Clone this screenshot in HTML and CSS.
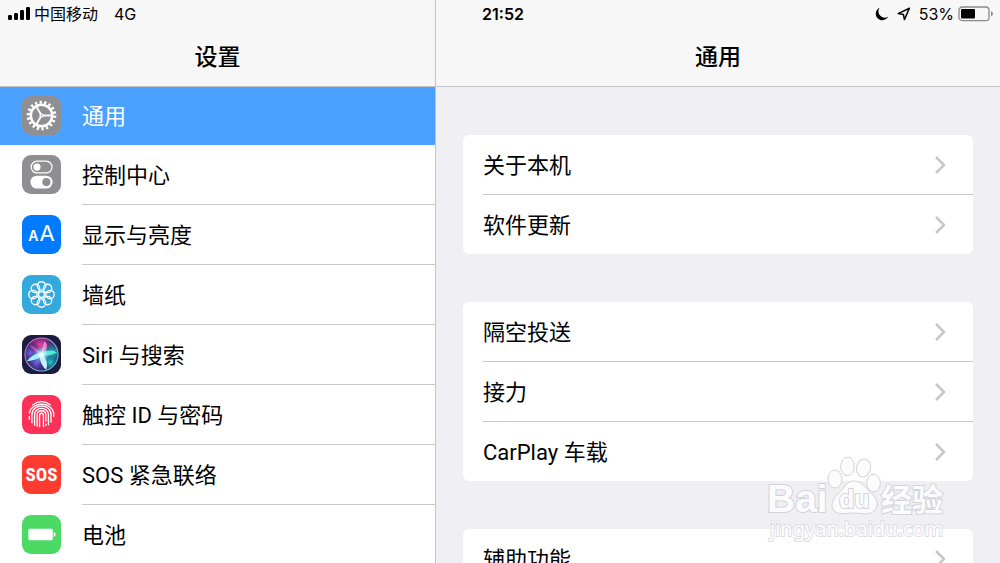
FILE: index.html
```
<!DOCTYPE html>
<html lang="zh-CN">
<head>
<meta charset="utf-8">
<meta name="viewport" content="width=device-width, initial-scale=1">
<title>设置</title>
<link rel="stylesheet" href="styles.css">
</head>
<body>
<div class="app">
  <div class="status">
    <div class="status-left">
      <svg class="signal" viewBox="0 0 22 14" aria-hidden="true"><rect x="0" y="8" width="4" height="5" rx="1.3"/><rect x="6" y="6" width="4" height="7" rx="1.3"/><rect x="12" y="3" width="4" height="10" rx="1.3"/><rect x="18" y="0" width="4" height="13" rx="1.3"/></svg>
      <span class="carrier">中国移动</span>
      <span>4G</span>
    </div>
    <time class="clock">21:52</time>
    <div class="status-right">
      <svg class="moon" viewBox="0 0 14 14" aria-hidden="true"><path d="M4.6 .8A6.5 6.5 0 1 0 13.2 9.4A6.2 6.2 0 0 1 4.6 .8Z"/></svg>
      <svg class="arrow" viewBox="0 0 14 14" aria-hidden="true"><path d="M12.4 1.2L1.2 6.6L6.4 7.4L7.4 12.6Z" fill="none" stroke="#000" stroke-width="1.5" stroke-linejoin="round"/></svg>
      <span>53%</span>
      <svg class="battery" viewBox="0 0 36 16" aria-hidden="true"><rect x="1" y="1" width="30" height="13.6" rx="3.2" fill="none" stroke="#8b8b8b" stroke-width="1.3"/><rect x="3" y="3" width="14" height="9.6" rx="1"/><path d="M33 5.3Q35 6 35 7.8T33 10.3Z" fill="#8b8b8b"/></svg>
    </div>
  </div>

  <nav class="pane sidebar" aria-label="设置">
    <h1 class="title">设置</h1>
    <ul class="menu">
      <li><a class="item selected" href="#general" aria-current="page">
        <svg class="icon gray" viewBox="0 0 40 40" aria-hidden="true"><g fill="none" stroke="#fff"><circle cx="20" cy="20" r="13.6" stroke-width="3.2" stroke-dasharray="2.3 2.447"/><circle cx="20" cy="20" r="11" stroke-width="2.6"/><path d="M20 20H31M20 20L14.5 10.5M20 20L14.5 29.5" stroke-width="1.9"/></g><circle cx="20" cy="20" r="2.1" fill="#fff"/><circle cx="20" cy="20" r=".8" fill="#8e8e93"/></svg>
        <span class="label">通用</span></a></li>
      <li><a class="item" href="#control">
        <svg class="icon gray" viewBox="0 0 40 40" aria-hidden="true"><rect x="9.4" y="6.4" width="21.4" height="12" rx="6" fill="none" stroke="#fff" stroke-width="1.3"/><circle cx="15.4" cy="12.4" r="3.7" fill="#fff"/><rect x="8.6" y="21.2" width="22.8" height="13.2" rx="6.6" fill="#fff"/><circle cx="25" cy="27.8" r="4.2" fill="#8e8e93"/></svg>
        <span class="label">控制中心</span></a></li>
      <li><a class="item" href="#display">
        <span class="icon blue" aria-hidden="true"><span class="aa-small">A</span><span class="aa-large">A</span></span>
        <span class="label">显示与亮度</span></a></li>
      <li><a class="item" href="#wallpaper">
        <svg class="icon cyan" viewBox="0 0 40 40" aria-hidden="true"><g fill="none" stroke="#fff" stroke-width="1.4"><circle cx="20" cy="20" r="3.1"/><circle cx="20" cy="11.2" r="4.3"/><circle cx="26.2" cy="13.8" r="4.3"/><circle cx="28.8" cy="20" r="4.3"/><circle cx="26.2" cy="26.2" r="4.3"/><circle cx="20" cy="28.8" r="4.3"/><circle cx="13.8" cy="26.2" r="4.3"/><circle cx="11.2" cy="20" r="4.3"/><circle cx="13.8" cy="13.8" r="4.3"/></g></svg>
        <span class="label">墙纸</span></a></li>
      <li><a class="item" href="#siri">
        <svg class="icon night" viewBox="0 0 40 40" aria-hidden="true">
          <defs>
            <radialGradient id="core"><stop offset="0" stop-color="#fff"/><stop offset=".25" stop-color="#dffcff" stop-opacity=".85"/><stop offset="1" stop-color="#6fd8ff" stop-opacity="0"/></radialGradient>
            <radialGradient id="pink"><stop offset="0" stop-color="#ef3fa8"/><stop offset="1" stop-color="#a01f7e" stop-opacity="0"/></radialGradient>
            <radialGradient id="teal"><stop offset="0" stop-color="#22cfc9"/><stop offset="1" stop-color="#0e6f92" stop-opacity="0"/></radialGradient>
            <radialGradient id="violet"><stop offset="0" stop-color="#7b67ec"/><stop offset="1" stop-color="#31277c" stop-opacity="0"/></radialGradient>
            <linearGradient id="rim" x1="0" x2="1" y2="1"><stop offset="0" stop-color="#d955a9"/><stop offset=".5" stop-color="#a9a2d8"/><stop offset="1" stop-color="#49c7ce"/></linearGradient>
            <clipPath id="orb"><circle cx="20" cy="20" r="17"/></clipPath>
          </defs>
          <g clip-path="url(#orb)"><circle cx="20" cy="20" r="17" fill="#2b2663"/><circle cx="19" cy="10" r="14" fill="url(#pink)"/><circle cx="9" cy="19" r="12" fill="url(#violet)"/><circle cx="31" cy="18" r="12" fill="url(#teal)"/><circle cx="15" cy="28" r="12" fill="url(#violet)"/><circle cx="29" cy="28" r="10" fill="url(#teal)"/>
            <path d="M20 20Q10 15 8 10Q15 13 20 20" fill="#f252ad" opacity=".75"/><path d="M19 20L23 6Q29 12 21 20" fill="#fc8fd1" opacity=".9"/><path d="M20 18Q11 19 5 27Q15 26 21 21" fill="#9ff6ff"/><path d="M20 18Q30 14 36 18Q29 22 20 21" fill="#50ead5"/><path d="M18 20Q18 30 25 36Q27 27 22 20" fill="#c7f4ff"/><circle cx="20" cy="20" r="9" fill="url(#core)"/>
          </g><circle cx="20" cy="20" r="17" fill="none" stroke="url(#rim)" stroke-width="1.1"/></svg>
        <span class="label">Siri 与搜索</span></a></li>
      <li><a class="item" href="#touchid">
        <svg class="icon pink" viewBox="0 0 40 40" aria-hidden="true"><g fill="none" stroke="#fff" stroke-width="1.35" stroke-linecap="round"><path d="M11 10Q20 3.5 29 10"/><path d="M7.5 18.5C9.5 6.5 30.5 6.5 32.5 18.5L32.5 22"/><path d="M7.5 22V25"/><path d="M10.2 28.5V20C10.2 8.5 29.8 8.5 29.8 20V28"/><path d="M12.9 31V20.5C12.9 11.5 27.1 11.5 27.1 20.5V30.5"/><path d="M15.5 32V21C15.5 14.5 24.5 14.5 24.5 21V27"/><path d="M18 32.5V21.5C18 17.8 22 17.8 22 21.5V32.5"/><path d="M24.5 30V31.5"/></g></svg>
        <span class="label">触控 ID 与密码</span></a></li>
      <li><a class="item" href="#sos">
        <span class="icon red" aria-hidden="true">SOS</span>
        <span class="label">SOS 紧急联络</span></a></li>
      <li><a class="item" href="#battery">
        <svg class="icon green" viewBox="0 0 40 40" aria-hidden="true"><rect x="6.5" y="14" width="25" height="12" rx="1.3" fill="#fff"/><path d="M32.5 17.5Q34.5 18 34.5 20T32.5 22.5Z" fill="#fff"/></svg>
        <span class="label">电池</span></a></li>
    </ul>
  </nav>

  <main class="pane detail">
    <h2 class="title">通用</h2>
    <div class="groups">
      <ul class="card">
        <li><a class="row" href="#about"><span>关于本机</span><svg class="chevron" viewBox="0 0 12 20" aria-hidden="true"><path d="M2 2L10 10L2 18"/></svg></a></li>
        <li><a class="row" href="#update"><span>软件更新</span><svg class="chevron" viewBox="0 0 12 20" aria-hidden="true"><path d="M2 2L10 10L2 18"/></svg></a></li>
      </ul>
      <ul class="card">
        <li><a class="row" href="#airdrop"><span>隔空投送</span><svg class="chevron" viewBox="0 0 12 20" aria-hidden="true"><path d="M2 2L10 10L2 18"/></svg></a></li>
        <li><a class="row" href="#handoff"><span>接力</span><svg class="chevron" viewBox="0 0 12 20" aria-hidden="true"><path d="M2 2L10 10L2 18"/></svg></a></li>
        <li><a class="row" href="#carplay"><span>CarPlay 车载</span><svg class="chevron" viewBox="0 0 12 20" aria-hidden="true"><path d="M2 2L10 10L2 18"/></svg></a></li>
      </ul>
      <ul class="card">
        <li><a class="row" href="#accessibility"><span>辅助功能</span><svg class="chevron" viewBox="0 0 12 20" aria-hidden="true"><path d="M2 2L10 10L2 18"/></svg></a></li>
      </ul>
    </div>
  </main>

  <svg class="watermark" viewBox="0 0 184 92" role="img" aria-label="Baidu 经验 jingyan.baidu.com">
    <g fill="#fcfcfe" stroke="#d3d3d8" stroke-width="1">
      <ellipse cx="68" cy="27" rx="7" ry="9"/><ellipse cx="80.5" cy="14.5" rx="6.8" ry="9.3"/><ellipse cx="96.5" cy="16" rx="7" ry="9" transform="rotate(12 96.5 16)"/><ellipse cx="106.5" cy="31" rx="6.8" ry="8.8"/>
      <path d="M87 29C95 29 98 36 104 41C110 46 112 53 108 58C103 64 95 61 87 61C79 61 71 64 66.5 58C62.5 52 67 46 72 41C78 36 79 29 87 29Z"/>
    </g>
    <g class="mark">
      <text x="0" y="60" class="latin">Bai</text>
      <text x="72" y="56" class="du">du</text>
      <text x="114" y="59" class="cjk">经验</text>
      <text x="3" y="84" class="url">jingyan.baidu.com</text>
    </g>
  </svg>
</div>
</body>
</html>
```
FILE: styles.css
```
* {
  box-sizing: border-box;
}

body {
  margin: 0;
  background: #efeff4;
  color: #000;
  font-family: Roboto, "Noto Sans CJK SC", sans-serif;
  font-size: 22px;
  line-height: 32px;
}

ul {
  margin: 0;
  padding: 0;
  list-style: none;
}

a {
  color: inherit;
  text-decoration: none;
}

svg {
  display: block;
  flex: none;
}

.app {
  position: relative;
  display: grid;
  grid-template-columns: 43.6% 1fr;
  grid-template-rows: 28px 1fr;
  height: 100vh;
  overflow: hidden;
}

.status {
  z-index: 1;
  grid-area: 1 / 1 / 2 / 3;
  display: grid;
  grid-template-columns: 1fr auto 1fr;
  align-items: center;
  padding: 0 6px 0 8px;
  font-family: Inter, "Noto Sans CJK SC", sans-serif;
  font-size: 16px;
  line-height: 28px;
}

.status-left,
.status-right {
  display: flex;
  align-items: center;
}

.status-right {
  justify-content: flex-end;
  gap: 8px;
}

.signal {
  width: 22px;
  height: 14px;
  margin-right: 4px;
}

.carrier {
  margin-right: 16px;
}

.clock {
  padding-left: 4px;
  font-weight: 600;
}

.moon,
.arrow {
  width: 14px;
  height: 14px;
}

.battery {
  width: 36px;
  height: 16px;
  margin-left: -4px;
}

.pane {
  min-width: 0;
  min-height: 0;
  padding-top: 28px;
  overflow: hidden;
  background: #f7f7f7;
}

.sidebar {
  grid-area: 1 / 1 / 3 / 2;
  border-right: 1px solid #c4c4c9;
}

.detail {
  grid-area: 1 / 2 / 3 / 3;
}

.title {
  height: 59px;
  margin: 0;
  border-bottom: 1px solid #c4c4c9;
  font-size: 23px;
  font-weight: 500;
  line-height: 60px;
  text-align: center;
}

.menu {
  height: 100%;
  background: #fff;
}

.item {
  display: flex;
  align-items: center;
  padding-left: 22px;
}

.label {
  flex: 1;
  height: 60px;
  margin-left: 21px;
  border-bottom: 1px solid #c8c7cc;
  line-height: 62px;
}

.selected {
  background: #4ba1ff;
  color: #fff;
}

.selected .label {
  height: 58px;
  border: 0;
  line-height: 60px;
}

.icon {
  display: flex;
  flex: none;
  align-items: baseline;
  justify-content: center;
  width: 39px;
  height: 39px;
  margin-bottom: 1px;
  border-radius: 9px;
  color: #fff;
  line-height: 39px;
}

.gray { background: #8e8e93; }
.blue { background: #007aff; }
.cyan { background: #34aadc; }
.night { background: #1b1c40; }
.pink { background: #fc3158; }
.green { background: #4cd964; }

.red {
  background: #ff3b30;
  font-family: "Roboto Condensed", "Liberation Sans Narrow", "Noto Sans CJK SC", sans-serif;
  font-size: 19px;
  font-weight: 700;
}

.blue {
  gap: 1px;
  font-family: Inter, sans-serif;
  line-height: 36px;
}

.aa-small {
  font-size: 14px;
  font-weight: 600;
}

.aa-large {
  font-size: 22px;
}

.groups {
  display: flex;
  flex-direction: column;
  gap: 48px;
  height: 100%;
  padding: 48px 27px;
  background: #efeff4;
}

.card {
  flex: none;
  padding-left: 20px;
  border-radius: 6px;
  background: #fff;
}

.row {
  display: flex;
  align-items: center;
  justify-content: space-between;
  height: 60px;
  padding-right: 27px;
  border-bottom: 1px solid #c8c7cc;
  line-height: 34px;
}

.row span {
  padding-top: 2px;
}

.card li:last-child .row {
  height: 59px;
  border: 0;
}

.chevron {
  width: 12px;
  height: 20px;
  fill: none;
  stroke: #c7c7cc;
  stroke-width: 2.5;
}

.watermark {
  position: absolute;
  right: 49px;
  bottom: 19px;
  z-index: 2;
  width: 184px;
  height: 92px;
  pointer-events: none;
}

.mark {
  fill: #fcfcfe;
  stroke: #d3d3d8;
  stroke-width: 2px;
  paint-order: stroke;
}

.latin {
  font: 700 39px "Liberation Sans", sans-serif;
}

.du {
  font: 700 25px "Liberation Sans", sans-serif;
}

.cjk {
  font: 700 31px "Noto Sans CJK SC", sans-serif;
}

.url {
  font: 400 20px "Noto Sans", sans-serif;
  stroke: #dedee3;
}
```
